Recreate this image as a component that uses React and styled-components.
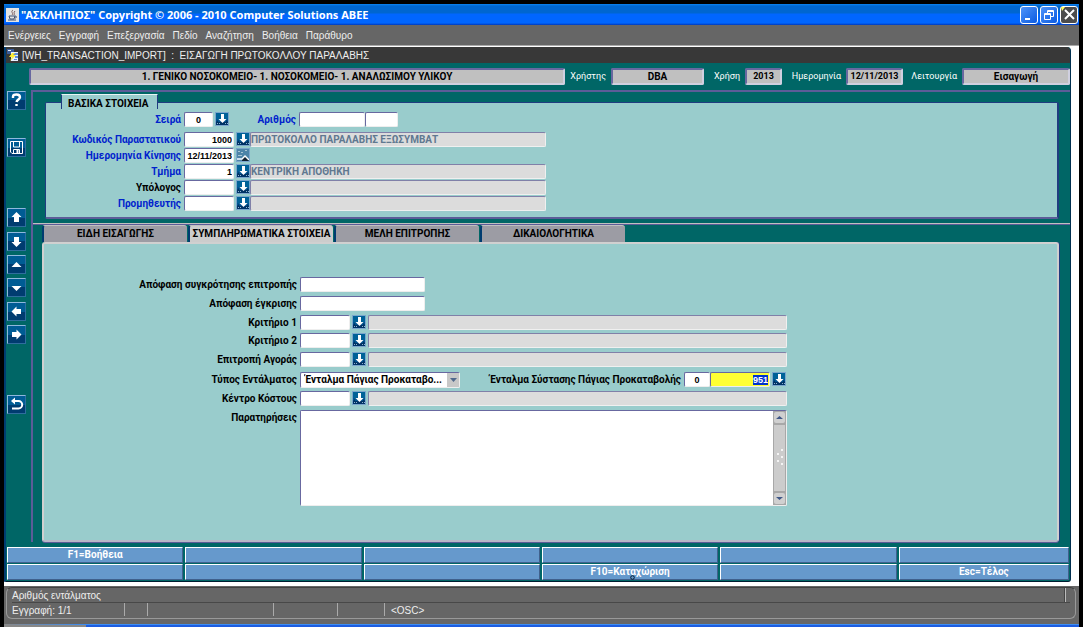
import React, { useEffect, useRef } from "react";
import styled, { createGlobalStyle, css } from "styled-components";

const Global = createGlobalStyle`
  * { box-sizing: border-box; }
  body { margin: 0; background: #000; font-family: Roboto, "Noto Sans", sans-serif; font-size: 10px; line-height: 14px; color: #000; }
  input, select, textarea, button { font: inherit; color: inherit; margin: 0; padding: 0; border: 0; border-radius: 0; outline: 0; }
`;

const Screen = styled.div`
  min-height: 100vh;
  display: flex;
  flex-direction: column;
  padding: 4px 4px 0;
`;

const TitleBar = styled.header`
  height: 21px;
  display: flex;
  align-items: center;
  gap: 2px;
  padding: 0 1px 0 2px;
  background: linear-gradient(#0a84f4 0, #0066d0 2px, #0066d0 9px, #0066ff 10px, #0066ff 19px, #0038b8 21px);
  color: #fff;
`;

const TitleText = styled.h1`
  flex: 1;
  margin: 0;
  font-family: "Noto Sans", sans-serif;
  font-size: 11px;
  font-weight: 700;
  line-height: 16px;
  white-space: pre;
`;

const WindowButton = styled.button`
  width: 18px;
  height: 18px;
  display: flex;
  border: 1px solid #fff;
  border-radius: 3px;
  background: ${(p) => (p.$dark ? "#4c4c4c" : "linear-gradient(135deg, #4f94fa, #0a5ae0)")};
`;

const MenuBar = styled.nav`
  height: 20px;
  display: flex;
  align-items: center;
  gap: 8px;
  padding: 2px 4px 0;
  background: #666;
  font-family: "Liberation Sans", Arial, sans-serif;
`;

const MenuItem = styled.a`
  color: #eee;
  text-decoration: none;
`;

const Document = styled.div`
  flex: 1;
  display: flex;
  padding: 1px 8px 4px 0;
  border-top: 1px solid #aaa;
  background: #fff;
`;

const Form = styled.main`
  flex: 1;
  display: flex;
  flex-direction: column;
  background: #006666;
  border-left: 2px solid #003c70;
  border-bottom: 1px solid #001c30;
  border-right: 1px solid #003050;
  border-radius: 0 4px 3px 0;
  overflow: hidden;
`;

const FormTitle = styled.h2`
  height: 16px;
  margin: 0;
  display: flex;
  align-items: center;
  gap: 2px;
  background: #383838;
  color: #eee;
  font: 400 10px/15px "Liberation Sans", Arial, sans-serif;
  white-space: pre;
`;

const Body = styled.div`
  flex: 1;
  display: flex;
  gap: 5px;
`;

const Sidebar = styled.aside`
  width: 19px;
  padding-top: 28px;
  margin-left: 1px;
  display: flex;
  flex-direction: column;
`;

const SideButton = styled.button`
  width: 19px;
  height: 19px;
  margin-top: ${(p) => p.$gap || 0}px;
  display: flex;
  border: 1px solid #8fb8dc;
  border-right-color: #2f6d9e;
  border-bottom-color: #2f6d9e;
  background: linear-gradient(#005c94 50%, #003c70 50%);
`;

const Content = styled.div`
  flex: 1;
  min-width: 0;
  display: flex;
  flex-direction: column;
`;

const InfoBar = styled.div`
  height: 27px;
  display: flex;
  align-items: flex-start;
  padding: 5px 0 0;
  margin-left: -2px;
`;

const InfoBox = styled.output`
  ${(p) => (p.$width ? `width: ${p.$width}px;` : "flex: 1;")}
  height: 17px;
  border: 2px solid;
  border-color: #6868a0 #d0d0e0 #d0d0e0 #6868a0;
  border-radius: 2px;
  background: #c0c0c0;
  text-align: center;
  font-size: ${(p) => (p.$digits ? 9 : 10)}px;
  font-weight: 700;
  line-height: 13px;
  white-space: nowrap;
`;

const InfoLabel = styled.label`
  width: ${(p) => p.$width}px;
  padding-right: 5px;
  color: #fff;
  text-align: right;
  font-size: 9px;
  line-height: 16px;
`;

const Frame = styled.section`
  flex: 1;
  display: flex;
  flex-direction: column;
  border: 2px solid #5c5c98;
  border-right: 0;
  border-bottom: 0;
`;

const BasicPanel = styled.section`
  margin: 2px 11px 0 12px;
`;

const LegendTab = styled.h3`
  position: relative;
  width: 97px;
  height: 15px;
  margin: 0 0 -7px 16px;
  padding-left: 6px;
  border: 1px solid #203c80;
  border-top-color: #e8f4f4;
  border-bottom: 0;
  background: #99cccc;
  font-size: 10px;
  line-height: 18px;
  white-space: nowrap;
`;

const BasicGrid = styled.div`
  height: 117px;
  padding-top: 9px;
  border: 1px solid #203c80;
  border-right: 2px solid #203c80;
  border-bottom: 2px solid #5c5c98;
  border-radius: 2px;
  background: #99cccc;
`;

const Row = styled.div`
  height: ${(p) => p.$height || 16}px;
  display: flex;
  align-items: flex-start;
`;

const Label = styled.label`
  width: ${(p) => p.$width}px;
  padding-right: 3px;
  color: ${(p) => (p.$blue ? "#0022cc" : "#000")};
  text-align: right;
  font-weight: 700;
  line-height: 16px;
  white-space: nowrap;
`;

const sunken = css`
  border: 1px solid;
  border-color: #6868a0 #eee #eee #6868a0;
  border-radius: 2px;
`;

const Input = styled.input`
  ${sunken}
  width: ${(p) => p.$width}px;
  height: 15px;
  padding: 0 ${(p) => (p.$align === "right" ? 1 : 0)}px;
  background: ${(p) => p.$fill || "#fff"};
  font-family: "Liberation Sans", Arial, sans-serif;
  font-size: 9px;
  font-weight: 700;
  line-height: 13px;
  text-align: ${(p) => p.$align || "left"};
  &::selection { background: #0033cc; color: #fff; }
`;

const Display = styled(Input)`
  background: #dcdcdc;
  color: #607890;
  font-family: Roboto, "Noto Sans", sans-serif;
  font-size: 10px;
  border-color: #8080a8 #f0f0f0 #f0f0f0 #8080a8;
`;

const PickButton = styled.button`
  width: 14px;
  height: 14px;
  margin: 0 ${(p) => p.$after || 0}px 0 2px;
  display: flex;
  border: 1px solid #7aa6cc;
  background: #005590;
`;

const Divider = styled.hr`
  width: 100%;
  height: 2px;
  margin: 4px 0 0;
  border: 0;
  border-top: 1px solid #c0c0c0;
  background: #5c5c98;
`;

const TabBar = styled.div`
  height: 17px;
  display: flex;
  gap: 1px;
  padding-left: 9px;
`;

const Tab = styled.button`
  width: 145px;
  border-left: 2px solid #003c70;
  border-top: 1px solid #c0c0c0;
  border-radius: 3px 3px 0 0;
  background: ${(p) => (p.$active ? "#cccccc" : "#9c9ca4")};
  font-weight: 700;
  line-height: 16px;
  text-align: center;
  white-space: nowrap;
`;

const TabPanel = styled.section`
  flex: 1;
  margin: 0 11px 0 9px;
  padding: 33px 0 34px;
  border: 2px solid #d0d0d0;
  border-bottom-color: #b8b8c8;
  border-radius: 3px;
  background: #99cccc;
  box-shadow: 1px 0 0 #203c80, 0 1px 0 #5c5c98;
`;

const SelectWrap = styled.span`
  position: relative;
  display: flex;
`;

const Select = styled.select`
  ${sunken}
  width: 160px;
  height: 16px;
  padding: 0 0 0 3px;
  appearance: none;
  background: #fff;
  font-weight: 700;
  line-height: 14px;
  text-indent: 1px;
`;

const SelectArrow = styled.svg`
  position: absolute;
  top: 1px;
  right: 1px;
  pointer-events: none;
`;

const Memo = styled.div`
  ${sunken}
  width: 487px;
  height: 96px;
  display: flex;
  background: #fff;
`;

const TextArea = styled.textarea`
  flex: 1;
  resize: none;
  overflow: hidden;
`;

const ScrollBar = styled.svg`
  width: 13px;
  height: 94px;
`;

const KeyGrid = styled.div`
  display: grid;
  grid-template-columns: repeat(5, 178fr) 172fr;
  gap: 1px 2px;
  padding: 5px 1px 1px;
`;

const KeyButton = styled.button`
  position: relative;
  height: 16px;
  border: 1px solid;
  border-color: #fff #40608c #40608c #fff;
  background: #6699cc;
  color: #fff;
  font-weight: 700;
  line-height: 14px;
`;

const Pointer = styled.svg`
  position: absolute;
  left: 50%;
  bottom: -1px;
`;

const StatusBar = styled.footer`
  padding: 1px 3px 5px 2px;
  background: #666;
  color: #eee;
  font-family: "Liberation Sans", Arial, sans-serif;
`;

const StatusFrame = styled.div`
  height: 32px;
  border: 1px solid #999;
  border-top-color: #404040;
  border-radius: 6px;
`;

const StatusLine = styled.div`
  height: 15px;
  display: flex;
  margin: 0 5px;
  border-bottom: ${(p) => (p.$ruled ? "1px solid #484848" : "0")};
  line-height: 15px;
`;

const StatusCell = styled.span`
  width: ${(p) => p.$width}px;
  height: 13px;
  margin-right: 1px;
  padding-left: ${(p) => p.$indent || 0}px;
  border-right: ${(p) => (p.$last ? "0" : "1px solid #aaa")};
  line-height: 15px;
`;

const StatusEnd = styled.span`
  width: 2px;
  height: 14px;
  margin: 0 4px 0 auto;
  border-right: 1px solid #bbb;
  border-left: 1px solid #444;
`;

const TaskStrip = styled.div`
  height: 3px;
  display: flex;
  border-top: 1px solid #3c8cf0;
  border-left: 82px solid #888;
  background: #1c5ce0;
`;

const DownArrow = () => (
  <svg width="12" height="12" viewBox="0 0 12 12">
    <path d="M0 0h12v6H0z" fill="#006298" />
    <path d="M0 12V9l2-2v2h8V7l2 2v3z" fill="#003366" />
    <path d="M5 1h3v5h2.500L6.500 10 2.500 6H5z" fill="#fff" />
    <path d="M1 10h1v1H1zM3 10h1v1H3zM9 10h1v1H9zM11 10h1v1h-1z" fill="#8cb4d0" />
  </svg>
);

const Calendar = () => (
  <svg width="12" height="12" viewBox="0 0 12 12">
    <path d="M0 0h12v12H0z" fill="#4d84a8" />
    <path d="M1 2h2v1H1zM4 3h2v1H4zM8 1h2v1H8zM1 6h4v1H1z" fill="#a8c4d4" />
    <path d="M0 9h6v2H0z" fill="#cde" />
    <path d="M5 9l3-3 4 4v1H5z" fill="#fff" />
    <path d="M5 11l3-3 4 4H5z" fill="#102030" />
  </svg>
);

const sideShapes = {
  help: <path d="M5 6V4.500C5 3 6.500 2.500 8.500 2.500S12 3.500 12 5.300 9 7.800 8.500 10M8.500 12v2" fill="none" stroke="#fff" strokeWidth="2.400" />,
  save: (
    <g fill="none" stroke="#fff">
      <path d="M2.500 2.500h12v12H4l-1.500-1.500zM5.500 3v5h6V3M5.500 14.500v-4h6v4" />
      <path d="M9.500 11v3" strokeWidth="2" />
    </g>
  ),
  up: <path d="M8.500 3L13.500 8H11v5H6V8H3.500z" fill="#fff" />,
  down: <path d="M8.500 14L13.500 9H11V4H6v5H3.500z" fill="#fff" />,
  first: <path d="M8.500 6l5 5h-10z" fill="#fff" />,
  last: <path d="M8.500 12l5-5h-10z" fill="#fff" />,
  left: <path d="M3.500 8.500l5-5V6H13v5H8.500v2.500z" fill="#fff" />,
  right: <path d="M13.500 8.500l-5-5V6H4v5h4.500v2.500z" fill="#fff" />,
  back: (
    <g fill="none" stroke="#fff" strokeWidth="2">
      <path d="M5 5h5.500a3.700 3.700 0 0 1 0 7.400H4" />
      <path d="M3 5l4-3.500v7z" fill="#fff" stroke="none" />
    </g>
  ),
};

const sideItems = [
  ["help", "Βοήθεια", 0],
  ["save", "Αποθήκευση", 28],
  ["up", "Προηγούμενη εγγραφή", 51],
  ["down", "Επόμενη εγγραφή", 5],
  ["first", "Σελίδα πάνω", 4],
  ["last", "Σελίδα κάτω", 4],
  ["left", "Προηγούμενο πεδίο", 5],
  ["right", "Επόμενο πεδίο", 4],
  ["back", "Επιστροφή", 51],
];

const basicRows = [
  { id: "doc", label: "Κωδικός Παραστατικού", value: "1000", text: "ΠΡΩΤΟΚΟΛΛΟ ΠΑΡΑΛΑΒΗΣ ΕΞΩΣΥΜΒΑΤ", blue: true },
  { id: "date", label: "Ημερομηνία Κίνησης", value: "12/11/2013", blue: true, calendar: true },
  { id: "dept", label: "Τμήμα", value: "1", text: "ΚΕΝΤΡΙΚΗ ΑΠΟΘΗΚΗ", blue: true },
  { id: "acct", label: "Υπόλογος", value: "", text: "" },
  { id: "supp", label: "Προμηθευτής", value: "", text: "", blue: true },
];

const keys = ["F1=Βοήθεια", "", "", "", "", "", "", "", "", "F10=Καταχώριση", "", "Esc=Τέλος"];
const menus = ["Ενέργειες", "Εγγραφή", "Επεξεργασία", "Πεδίο", "Αναζήτηση", "Βοήθεια", "Παράθυρο"];
const tabs = ["ΕΙΔΗ ΕΙΣΑΓΩΓΗΣ", "ΣΥΜΠΛΗΡΩΜΑΤΙΚΑ ΣΤΟΙΧΕΙΑ", "ΜΕΛΗ ΕΠΙΤΡΟΠΗΣ", "ΔΙΚΑΙΟΛΟΓΗΤΙΚΑ"];

function LookupRow({ id, label, height }) {
  return (
    <Row $height={height}>
      <Label $width={256} htmlFor={id}>{label}</Label>
      <Input id={id} $width={50} />
      <PickButton aria-label={`Λίστα ${label}`} $after={2}><DownArrow /></PickButton>
      <Display aria-label={`Περιγραφή ${label}`} $width={419} readOnly />
    </Row>
  );
}

export default function App() {
  const orderRef = useRef(null);
  useEffect(() => {
    orderRef.current.focus();
    orderRef.current.select();
  }, []);

  return (
    <Screen>
      <Global />
      <TitleBar>
        <svg width="13" height="14" viewBox="0 0 13 14">
          <path d="M0 0h13v14H0z" fill="#e4e4e4" />
          <path d="M7 2c-3 2 1 3-1 5M9 3C7 5 9 5 8 7" fill="none" stroke="#806060" />
          <path d="M3 8h6l-1 3H4zM9 8c2 0 2 2 0 2M2 12h8" fill="none" stroke="#405070" />
        </svg>
        <TitleText>"ΑΣΚΛΗΠΙΟΣ" Copyright © 2006 - 2010 Computer Solutions ABEE</TitleText>
        <WindowButton aria-label="Ελαχιστοποίηση">
          <svg width="16" height="16"><path d="M4 11h5v2H4z" fill="#fff" /></svg>
        </WindowButton>
        <WindowButton aria-label="Επαναφορά">
          <svg width="16" height="16" fill="none" stroke="#fff">
            <path d="M6.500 6V3.500h6v6H10M3.500 6.500h6v6h-6zM3 7.500h7M6 4.500h7" />
          </svg>
        </WindowButton>
        <WindowButton aria-label="Κλείσιμο" $dark>
          <svg width="16" height="16">
            <path d="M4 3l9 9M13 3l-9 9" stroke="#fff" strokeWidth="2" />
            <path d="M0 0h4L1 4z" fill="#ffff66" />
          </svg>
        </WindowButton>
      </TitleBar>
      <MenuBar>
        {menus.map((m) => <MenuItem href="#" key={m}>{m}</MenuItem>)}
      </MenuBar>
      <Document>
        <Form>
          <FormTitle>
            <svg width="14" height="15" viewBox="0 0 14 15">
              <path d="M1 1h7v5H1z" fill="#3c5c98" />
              <path d="M2 2h3v1H2zM5 4h7v9H5z" fill="#e8f0ff" />
              <path d="M6 5h6v2H6zM9 8h3v2H9zM8 11h3v1H8z" fill="#5c8cdc" />
              <path d="M6 5L3 9h3l-2 4 6-6H7l2-2z" fill="#ffee33" />
            </svg>
            [WH_TRANSACTION_IMPORT]  :  ΕΙΣΑΓΩΓΗ ΠΡΩΤΟΚΟΛΛΟΥ ΠΑΡΑΛΑΒΗΣ
          </FormTitle>
          <Body>
            <Sidebar>
              {sideItems.map(([icon, name, gap]) => (
                <SideButton key={icon} aria-label={name} $gap={gap}>
                  <svg width="17" height="17" viewBox="0 0 17 17">{sideShapes[icon]}</svg>
                </SideButton>
              ))}
            </Sidebar>
            <Content>
              <InfoBar>
                <InfoBox>1. ΓΕΝΙΚΟ ΝΟΣΟΚΟΜΕΙΟ- 1. ΝΟΣΟΚΟΜΕΙΟ- 1. ΑΝΑΛΩΣΙΜΟΥ ΥΛΙΚΟΥ</InfoBox>
                <InfoLabel $width={46} htmlFor="user">Χρήστης</InfoLabel>
                <InfoBox id="user" $width={93}>DBA</InfoBox>
                <InfoLabel $width={41} htmlFor="year">Χρήση</InfoLabel>
                <InfoBox id="year" $width={37} $digits>2013</InfoBox>
                <InfoLabel $width={64} htmlFor="today">Ημερομηνία</InfoLabel>
                <InfoBox id="today" $width={57} $digits>12/11/2013</InfoBox>
                <InfoLabel $width={59} htmlFor="mode">Λειτουργία</InfoLabel>
                <InfoBox id="mode" $width={108}>Εισαγωγή</InfoBox>
              </InfoBar>
              <Frame>
                <BasicPanel>
                  <LegendTab>ΒΑΣΙΚΑ ΣΤΟΙΧΕΙΑ</LegendTab>
                  <BasicGrid>
                    <Row $height={20}>
                      <Label $width={138} $blue htmlFor="series">Σειρά</Label>
                      <Input id="series" $width={29} $align="center" defaultValue="0" />
                      <PickButton aria-label="Λίστα σειράς"><DownArrow /></PickButton>
                      <Label $width={70} $blue htmlFor="number">Αριθμός</Label>
                      <Input id="number" $width={66} />
                      <Input aria-label="Υποαριθμός" $width={33} />
                    </Row>
                    {basicRows.map((r) => (
                      <Row key={r.id}>
                        <Label $width={138} $blue={r.blue} htmlFor={r.id}>{r.label}</Label>
                        <Input id={r.id} $width={50} $align="right" defaultValue={r.value} />
                        <PickButton aria-label={`Λίστα ${r.label}`}>
                          {r.calendar ? <Calendar /> : <DownArrow />}
                        </PickButton>
                        {!r.calendar && (
                          <Display aria-label={`Περιγραφή ${r.label}`} $width={296} readOnly defaultValue={r.text} />
                        )}
                      </Row>
                    ))}
                  </BasicGrid>
                </BasicPanel>
                <Divider />
                <TabBar role="tablist">
                  {tabs.map((t, i) => (
                    <Tab key={t} role="tab" aria-selected={i === 1} $active={i === 1}>{t}</Tab>
                  ))}
                </TabBar>
                <TabPanel role="tabpanel">
                  <Row $height={19}>
                    <Label $width={256} htmlFor="decision">Απόφαση συγκρότησης επιτροπής</Label>
                    <Input id="decision" $width={125} />
                  </Row>
                  <Row $height={19}>
                    <Label $width={256} htmlFor="approval">Απόφαση έγκρισης</Label>
                    <Input id="approval" $width={125} />
                  </Row>
                  <LookupRow id="crit1" label="Κριτήριο 1" height={18} />
                  <LookupRow id="crit2" label="Κριτήριο 2" height={19} />
                  <LookupRow id="market" label="Επιτροπή Αγοράς" height={20} />
                  <Row $height={19}>
                    <Label $width={256} htmlFor="kind">Τύπος Εντάλματος</Label>
                    <SelectWrap>
                      <Select id="kind"><option>Ένταλμα Πάγιας Προκαταβο...</option></Select>
                      <SelectArrow width="12" height="14">
                        <path d="M0 0h12v14H0z" fill="#c8c8c8" />
                        <path d="M3 5h7l-3.500 4z" fill="#50688c" />
                      </SelectArrow>
                    </SelectWrap>
                    <Label $width={224} htmlFor="series2">Ένταλμα Σύστασης Πάγιας Προκαταβολής</Label>
                    <Input id="series2" $width={26} $align="center" defaultValue="0" />
                    <Input ref={orderRef} aria-label="Αριθμός εντάλματος" $width={60} $align="right" $fill="#ffff33" defaultValue="951" />
                    <PickButton aria-label="Λίστα ενταλμάτων"><DownArrow /></PickButton>
                  </Row>
                  <LookupRow id="cost" label="Κέντρο Κόστους" height={19} />
                  <Row $height={96}>
                    <Label $width={256} htmlFor="notes">Παρατηρήσεις</Label>
                    <Memo>
                      <TextArea id="notes" />
                      <ScrollBar viewBox="0 0 13 94">
                        <path d="M0 0h13v94H0z" fill="#a8a8a8" />
                        <rect x="1" y="1" width="11" height="11" rx="2" fill="#d0d0d0" />
                        <rect x="1" y="14" width="11" height="66" fill="#ccc" />
                        <rect x="1" y="82" width="11" height="11" rx="2" fill="#d0d0d0" />
                        <path d="M3 8h7L6.500 5zM3 86h7l-3.500 3z" fill="#405888" />
                        <path d="M8 38h2v2H8zM4 42h2v2H4zM8 45h2v2H8zM4 49h2v2H4zM8 52h2v2H8z" fill="#f4f4f4" />
                      </ScrollBar>
                    </Memo>
                  </Row>
                </TabPanel>
              </Frame>
            </Content>
          </Body>
          <KeyGrid>
            {keys.map((k, i) => (
              <KeyButton key={i} aria-label={k || `Πλήκτρο ${i + 1}`}>
                {k}
                {i === 9 && (
                  <Pointer width="5" height="5">
                    <circle cx="2.500" cy="2.500" r="1.800" fill="#6699cc" stroke="#001c30" />
                  </Pointer>
                )}
              </KeyButton>
            ))}
          </KeyGrid>
        </Form>
      </Document>
      <StatusBar>
        <StatusFrame>
          <StatusLine $ruled>Αριθμός εντάλματος<StatusEnd /></StatusLine>
          <StatusLine>
            <StatusCell $width={113}>Εγγραφή: 1/1</StatusCell>
            <StatusCell $width={22} />
            <StatusCell $width={125} />
            <StatusCell $width={63} />
            <StatusCell $width={46} />
            <StatusCell $width={80} $indent={5} $last>&lt;OSC&gt;</StatusCell>
          </StatusLine>
        </StatusFrame>
      </StatusBar>
      <TaskStrip />
    </Screen>
  );
}
